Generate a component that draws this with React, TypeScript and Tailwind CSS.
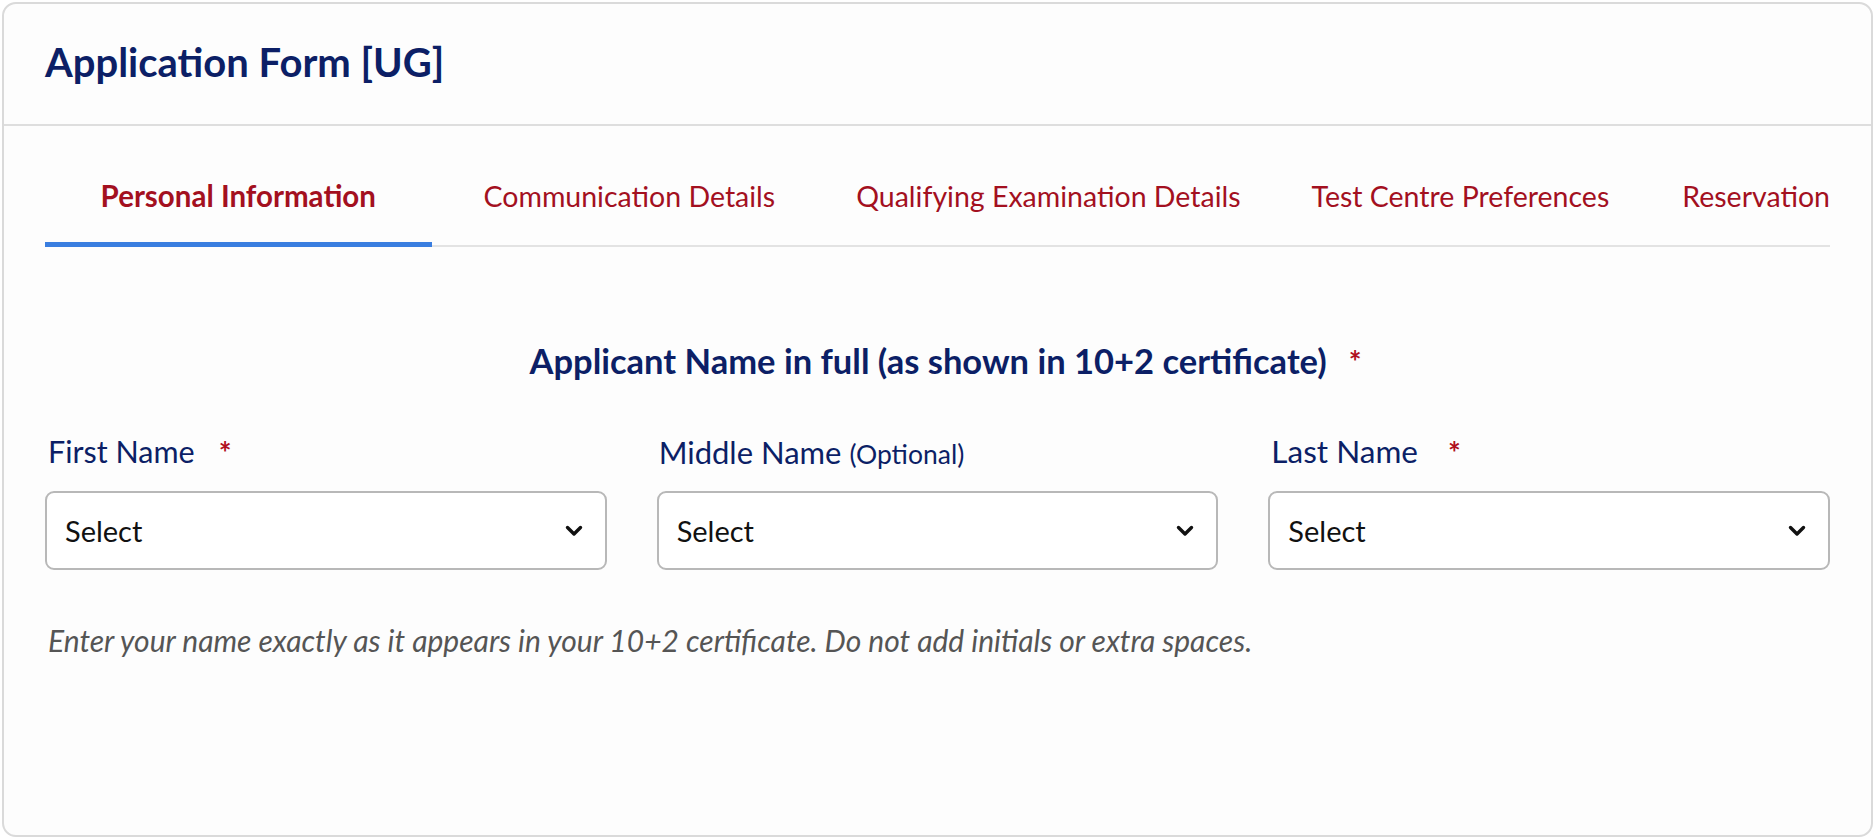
import React from "react";

const font = { fontFamily: "Lato, 'Open Sans', sans-serif" };

function Chevron() {
  return (
    <svg width="18" height="12" viewBox="0 0 18 12" className="shrink-0">
      <polyline points="2.5,2.5 9,9 15.5,2.5" fill="none" stroke="#111" strokeWidth="3.4" strokeLinecap="round" strokeLinejoin="round" />
    </svg>
  );
}

function SelectBox() {
  return (
    <div className="h-[79px] rounded-[9px] border-2 border-[#b8b8b8] bg-white flex items-center justify-between pl-[18px] pr-[22px]">
      <span className="text-[29px] text-[#111]">Select</span>
      <Chevron />
    </div>
  );
}

function Star() {
  return <span className="text-[#b0101e] font-bold text-[30px] leading-none">*</span>;
}

export default function App() {
  const tabs = [
    { label: "Communication Details", ml: "ml-[52px]" },
    { label: "Qualifying Examination Details", ml: "ml-[81px]" },
    { label: "Test Centre Preferences", ml: "ml-[71px]" },
    { label: "Reservation", ml: "ml-[73px]" },
  ];
  return (
    <div className="w-[1875px] h-[839px] bg-white p-[2px]" style={font}>
      <div className="h-full rounded-[14px] border-2 border-[#dadada] bg-[#fdfdfd] flex flex-col overflow-hidden">
        <div className="h-[122px] border-b-2 border-[#dedede] flex items-center px-[41px] pb-[4px] shrink-0">
          <h1 className="text-[40px] font-bold text-[#0c1f66] leading-none">Application Form [UG]</h1>
        </div>
        <div className="px-[41px] pt-[52px]">
          <div className="flex items-end border-b-2 border-[#e3e3e3] whitespace-nowrap">
            <div className="w-[391px] -mb-[2px] border-b-[5px] border-[#3a7ee0] pb-[28px] text-center text-[29.5px] leading-[36px] font-bold text-[#a3101f]">
              Personal Information
            </div>
            {tabs.map((t) => (
              <div key={t.label} className={`${t.ml} pb-[31px] text-[28.5px] leading-[36px] text-[#a3101f]`}>
                {t.label}
              </div>
            ))}
          </div>
          <div className="mt-[94px] flex justify-center items-center gap-[22px] leading-[40px] pl-[16px]">
            <span className="text-[34.5px] font-bold text-[#0c1f66]">Applicant Name in full (as shown in 10+2 certificate)</span>
            <Star />
          </div>
          <div className="mt-[53px] grid grid-cols-3 gap-x-[50px]">
            <div>
              <div className="h-[36px] flex items-center gap-[24px] pl-[3px]">
                <span className="text-[30.5px] text-[#0c1f66]">First Name</span>
                <Star />
              </div>
              <div className="mt-[21px]"><SelectBox /></div>
            </div>
            <div>
              <div className="h-[36px] flex items-baseline pl-[2px]">
                <span className="text-[31px] text-[#0c1f66] leading-[36px]">Middle Name</span>
                <span className="ml-[8px] text-[26.5px] text-[#0c1f66]">(Optional)</span>
              </div>
              <div className="mt-[21px]"><SelectBox /></div>
            </div>
            <div>
              <div className="h-[36px] flex items-center gap-[30px] pl-[3px]">
                <span className="text-[31.5px] text-[#0c1f66]">Last Name</span>
                <Star />
              </div>
              <div className="mt-[21px]"><SelectBox /></div>
            </div>
          </div>
          <p className="mt-[53px] pl-[3px] text-[30px] leading-[34px] italic text-[#555]">
            Enter your name exactly as it appears in your 10+2 certificate. Do not add initials or extra spaces.
          </p>
        </div>
      </div>
    </div>
  );
}
